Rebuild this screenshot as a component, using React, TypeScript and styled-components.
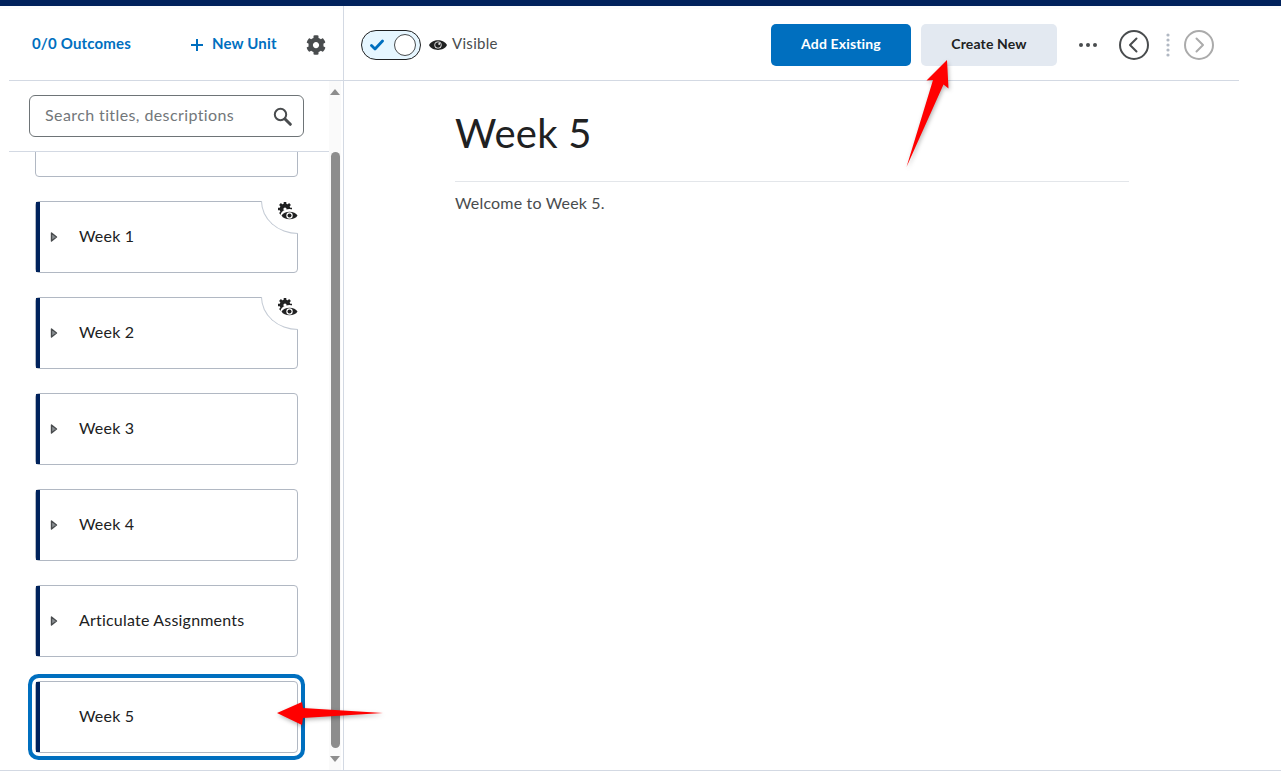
import React from "react";
import styled, { createGlobalStyle } from "styled-components";
import { FaCog } from "react-icons/fa";

const GlobalStyle = createGlobalStyle`
    html, body {
        margin: 0;
        padding: 0;
        background: #FFFFFF;
        font-family: "Lato", "Noto Sans", sans-serif;
        color: #202122;
    }
`;

const Page = styled.div`
    position: relative;
    width: 1281px;
    height: 771px;
    display: flex;
    flex-direction: column;
    overflow: hidden;
`;

const TopStripe = styled.div`
    height: 6px;
    flex: none;
    background-color: #00225c;
    box-shadow: 0 3px 0 #fbfcfd;
`;

const Body = styled.div`
    flex: 1;
    min-height: 0;
    display: flex;
    border-bottom: 1px solid #d3d9e3;
`;

const Sidebar = styled.aside`
    width: 344px;
    box-sizing: border-box;
    padding-left: 9px;
    border-right: 1px solid #d3d9e3;
    display: flex;
    flex-direction: column;
`;

const SidebarHeader = styled.div`
    height: 75px;
    box-sizing: border-box;
    flex: none;
    margin-right: -1px;
    border-bottom: 1px solid #d3d9e3;
    padding-left: 23px;
    display: flex;
    align-items: center;
`;

const HeaderLink = styled.span<{ $left?: number }>`
    color: #006fbf;
    font-size: 15px;
    font-weight: 700;
    letter-spacing: 0.17px;
    margin-left: ${props => props.$left ?? 0}px;
    display: inline-flex;
    align-items: center;
`;

const PlusIcon = styled.svg`
    width: 12px;
    height: 12px;
    margin-right: 9px;
    margin-top: 3px;
`;

const GearButton = styled.span`
    color: #494c4e;
    margin-left: 29px;
    margin-top: 3px;
    display: flex;
    font-size: 20px;
`;

const SidebarBody = styled.div`
    flex: 1;
    min-height: 0;
    display: flex;
`;

const Column = styled.div`
    width: 320px;
    flex: none;
    display: flex;
    flex-direction: column;
`;

const SearchRow = styled.div`
    height: 71px;
    flex: none;
    box-sizing: border-box;
    border-bottom: 1px solid #d3d9e3;
    padding: 14px 0 0 20px;
`;

const SearchBox = styled.div`
    width: 275px;
    height: 42px;
    box-sizing: border-box;
    border: 1px solid #6e7477;
    border-radius: 6px;
    padding: 0 11px 0 15px;
    display: flex;
    align-items: center;
    justify-content: space-between;
    color: #72777a;
    font-size: 16px;
    letter-spacing: 0.4px;
`;

const SearchText = styled.span`
    margin-bottom: 4px;
`;

const CardViewport = styled.div`
    flex: 1;
    min-height: 0;
    overflow: hidden;
    padding: 7px 0 0 26px;
`;

const CardList = styled.div`
    margin-top: -54px;
    display: flex;
    flex-direction: column;
    gap: 24px;
`;

const Card = styled.div<{ $active?: boolean; $bare?: boolean }>`
    position: relative;
    width: 263px;
    height: 72px;
    box-sizing: border-box;
    display: flex;
    align-items: center;
    background: #FFFFFF;
    border: 1px solid #b1b8c3;
    border-radius: 4px;
    font-size: 16px;
    letter-spacing: 0.2px;
    color: #202122;
    box-shadow: ${props => (props.$active ? "0 0 0 3px #FFFFFF, 0 0 0 7px #006fbf" : "none")};

    &::before {
        content: "";
        display: ${props => (props.$bare ? "none" : "block")};
        position: absolute;
        left: 0;
        top: 0;
        bottom: 0;
        width: 4px;
        background: #00225c;
    }
`;

const CaretSlot = styled.span`
    width: 43px;
    padding-left: 14px;
    box-sizing: border-box;
    flex: none;
    display: flex;
    align-items: center;
`;

const CardTitle = styled.span`
    margin-bottom: 4px;
`;

const Notch = styled.div`
    position: absolute;
    top: -1px;
    right: -1px;
    width: 37px;
    height: 33px;
    box-sizing: border-box;
    background: #FFFFFF;
    border-left: 1px solid #c3cad4;
    border-bottom: 1px solid #c3cad4;
    border-bottom-left-radius: 100%;
`;

const NotchIcon = styled.svg`
    position: absolute;
    top: 1px;
    right: 0;
    width: 21px;
    height: 20px;
`;

const Scrollbar = styled.div`
    width: 12px;
    flex: none;
    background: #fafafa;
    display: flex;
    flex-direction: column;
    align-items: center;
    padding: 8px 0 0;
    box-sizing: border-box;
`;

const ScrollArrow = styled.span<{ $down?: boolean }>`
    width: 0;
    height: 0;
    border-left: 5px solid transparent;
    border-right: 5px solid transparent;
    border-bottom: ${props => (props.$down ? "0" : "6px solid #8d8d8d")};
    border-top: ${props => (props.$down ? "6px solid #8d8d8d" : "0")};
    margin-top: ${props => (props.$down ? "8px" : "0")};
`;

const ScrollThumb = styled.div`
    width: 9px;
    height: 596px;
    margin-top: 57px;
    background: #8d8d8d;
    border-radius: 5px;
`;

const Main = styled.main`
    width: 895px;
    flex: none;
    display: flex;
    flex-direction: column;
`;

const Toolbar = styled.div`
    height: 75px;
    box-sizing: border-box;
    flex: none;
    border-bottom: 1px solid #d3d9e3;
    padding: 4px 25px 0 17px;
    display: flex;
    align-items: center;
`;

const Toggle = styled.div`
    width: 60px;
    height: 30px;
    box-sizing: border-box;
    border: 1px solid #202122;
    border-radius: 15px;
    background: #e6f6ff;
    padding: 0 4px 0 8px;
    display: flex;
    align-items: center;
    justify-content: space-between;
`;

const ToggleKnob = styled.span`
    width: 22px;
    height: 22px;
    box-sizing: border-box;
    border: 1px solid #494c4e;
    border-radius: 50%;
    background: #FFFFFF;
`;

const VisibleLabel = styled.span`
    margin-left: 8px;
    display: flex;
    align-items: center;
    gap: 5px;
    font-size: 15px;
    letter-spacing: 0.3px;
    color: #494c4e;
`;

const VisibleText = styled.span`
    margin-bottom: 5px;
`;

const Actions = styled.div`
    margin-left: auto;
    display: flex;
    align-items: center;
`;

const Button = styled.button<{ $primary?: boolean; $width: number }>`
    width: ${props => props.$width}px;
    height: 42px;
    border: 0;
    padding: 0 0 4px;
    border-radius: 5px;
    margin-right: 10px;
    background: ${props => (props.$primary ? "#006fbf" : "#e3e9f1")};
    color: ${props => (props.$primary ? "#FFFFFF" : "#202122")};
    font-family: inherit;
    font-size: 14px;
    font-weight: 700;
    letter-spacing: 0.15px;
`;

const MoreDots = styled.svg`
    width: 20px;
    height: 6px;
    margin: 0 0 0 11px;
`;

const NavIcon = styled.svg<{ $left: number }>`
    width: 30px;
    height: 30px;
    margin-left: ${props => props.$left}px;
`;

const NavDivider = styled.svg`
    width: 4px;
    height: 26px;
    margin-left: 17px;
`;

const Content = styled.div`
    padding: 29px 110px 0 111px;
`;

const Title = styled.h1`
    margin: 0;
    height: 71px;
    box-sizing: content-box;
    padding-bottom: 0;
    border-bottom: 1px solid #e3e6ea;
    font-size: 40px;
    font-weight: 400;
    line-height: 46px;
    letter-spacing: 0.25px;
    color: #202122;
`;

const Paragraph = styled.p`
    margin: 11px 0 0;
    font-size: 16px;
    line-height: 20px;
    letter-spacing: 0.17px;
    color: #494c4e;
`;

const AnnotationLayer = styled.svg`
    position: absolute;
    left: 0;
    top: 0;
    width: 1281px;
    height: 771px;
    pointer-events: none;
    filter: drop-shadow(1px 2px 2px rgba(0, 0, 0, 0.3));
`;

const Caret = () => (
    <svg width="8" height="10" viewBox="0 0 8 10">
        <path d="M1.5 1 L6.5 5 L1.5 9 Z" fill="#8a8f93" stroke="#494c4e" strokeWidth="1.4" strokeLinejoin="round" />
    </svg>
);

const VisibleEye = () => (
    <svg width="18" height="14" viewBox="0 0 18 14">
        <path d="M0 7 C3 0.5 15 0.5 18 7 C15 13.5 3 13.5 0 7 Z" fill="#202122" />
        <circle cx="9" cy="7" r="3.6" fill="#FFFFFF" />
        <circle cx="9" cy="7" r="2.8" fill="#202122" />
        <circle cx="10.2" cy="5.9" r="0.9" fill="#FFFFFF" />
    </svg>
);

const HiddenIcon = () => (
    <NotchIcon viewBox="0 0 21 20">
        <g fill="#202122">
            <circle cx="8" cy="7" r="5.4" />
            <g stroke="#202122" strokeWidth="2.6">
                <path d="M8 0V14M1 7H15M3 2L13 12M13 2L3 12" />
            </g>
            <circle cx="8" cy="7" r="1.6" fill="#FFFFFF" />
            <ellipse cx="12.5" cy="13.5" rx="9" ry="6.6" fill="#FFFFFF" />
            <path d="M4.5 13.5 C7 8.4 18 8.4 20.5 13.5 C18 18.6 7 18.6 4.5 13.5 Z" />
            <circle cx="12.5" cy="13.5" r="3.2" fill="#FFFFFF" />
            <circle cx="12.5" cy="13.5" r="2" />
        </g>
    </NotchIcon>
);

const units = [
    { id: "blank", title: "", caret: false, hidden: false },
    { id: "w1", title: "Week 1", caret: true, hidden: true },
    { id: "w2", title: "Week 2", caret: true, hidden: true },
    { id: "w3", title: "Week 3", caret: true, hidden: false },
    { id: "w4", title: "Week 4", caret: true, hidden: false },
    { id: "aa", title: "Articulate Assignments", caret: true, hidden: false },
    { id: "w5", title: "Week 5", caret: false, hidden: false, active: true },
];

export default function App() {
    return (
        <Page>
            <GlobalStyle />
            <TopStripe />
            <Body>
                <Sidebar>
                    <SidebarHeader>
                        <HeaderLink>0/0 Outcomes</HeaderLink>
                        <HeaderLink $left={60}>
                            <PlusIcon viewBox="0 0 12 12">
                                <path d="M6 0V12M0 6H12" stroke="#006fbf" strokeWidth="2" />
                            </PlusIcon>
                            New Unit
                        </HeaderLink>
                        <GearButton>
                            <FaCog />
                        </GearButton>
                    </SidebarHeader>
                    <SidebarBody>
                        <Column>
                            <SearchRow>
                                <SearchBox>
                                    <SearchText>Search titles, descriptions</SearchText>
                                    <svg width="19" height="19" viewBox="0 0 19 19">
                                        <circle cx="7.5" cy="7.5" r="5.7" fill="none" stroke="#494c4e" strokeWidth="2" />
                                        <path d="M12 12 L17.3 17.3" stroke="#494c4e" strokeWidth="3" strokeLinecap="round" />
                                    </svg>
                                </SearchBox>
                            </SearchRow>
                            <CardViewport>
                                <CardList>
                                    {units.map(unit => (
                                        <Card key={unit.id} $active={unit.active} $bare={unit.id === "blank"}>
                                            <CaretSlot>{unit.caret && <Caret />}</CaretSlot>
                                            <CardTitle>{unit.title}</CardTitle>
                                            {unit.hidden && (
                                                <Notch>
                                                    <HiddenIcon />
                                                </Notch>
                                            )}
                                        </Card>
                                    ))}
                                </CardList>
                            </CardViewport>
                        </Column>
                        <Scrollbar>
                            <ScrollArrow />
                            <ScrollThumb />
                            <ScrollArrow $down />
                        </Scrollbar>
                    </SidebarBody>
                </Sidebar>
                <Main>
                    <Toolbar>
                        <Toggle>
                            <svg width="14" height="12" viewBox="0 0 14 12">
                                <path d="M1.5 6.5 L5 10 L12.5 2" fill="none" stroke="#006fbf" strokeWidth="2.8" strokeLinecap="round" strokeLinejoin="round" />
                            </svg>
                            <ToggleKnob />
                        </Toggle>
                        <VisibleLabel>
                            <VisibleEye />
                            <VisibleText>Visible</VisibleText>
                        </VisibleLabel>
                        <Actions>
                            <Button $primary $width={140}>Add Existing</Button>
                            <Button $width={136}>Create New</Button>
                            <MoreDots viewBox="0 0 20 6">
                                <g fill="#494c4e">
                                    <circle cx="3" cy="3" r="2" />
                                    <circle cx="10" cy="3" r="2" />
                                    <circle cx="17" cy="3" r="2" />
                                </g>
                            </MoreDots>
                            <NavIcon $left={21} viewBox="0 0 30 30">
                                <circle cx="15" cy="15" r="14" fill="none" stroke="#494c4e" strokeWidth="2" />
                                <path d="M17.5 8.5 L11 15 L17.5 21.5" fill="none" stroke="#494c4e" strokeWidth="2" strokeLinecap="round" strokeLinejoin="round" />
                            </NavIcon>
                            <NavDivider viewBox="0 0 4 26">
                                <g fill="#b1b8c3">
                                    <circle cx="2" cy="3" r="1.6" />
                                    <circle cx="2" cy="8" r="1.6" />
                                    <circle cx="2" cy="13" r="1.6" />
                                    <circle cx="2" cy="18" r="1.6" />
                                    <circle cx="2" cy="23" r="1.6" />
                                </g>
                            </NavDivider>
                            <NavIcon $left={14} viewBox="0 0 30 30">
                                <circle cx="15" cy="15" r="14" fill="none" stroke="#ababab" strokeWidth="2" />
                                <path d="M12.5 8.5 L19 15 L12.5 21.5" fill="none" stroke="#ababab" strokeWidth="2" strokeLinecap="round" strokeLinejoin="round" />
                            </NavIcon>
                        </Actions>
                    </Toolbar>
                    <Content>
                        <Title>Week 5</Title>
                        <Paragraph>Welcome to Week 5.</Paragraph>
                    </Content>
                </Main>
            </Body>
            <AnnotationLayer viewBox="0 0 1281 771">
                <path d="M947 60 L926.5 80.5 L933 80 L906.5 167 L943.5 84.5 L948.5 88.5 Z" fill="#ff0000" />
                <path d="M277 713 L302 702 L303 708 L383 713 L303 718 L302 725 Z" fill="#ff0000" />
            </AnnotationLayer>
        </Page>
    );
}
